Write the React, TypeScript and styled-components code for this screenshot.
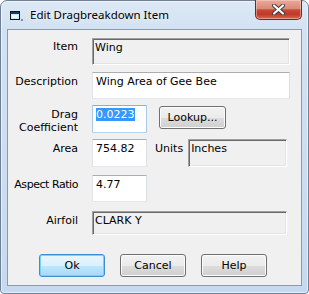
import React from 'react';
import styled, { createGlobalStyle, css } from 'styled-components';

const GlobalStyle = createGlobalStyle`
  html, body {
    margin: 0;
    padding: 0;
    background: #ffffff;
  }
  * {
    box-sizing: border-box;
  }
`;

const Window = styled.div`
  width: 309px;
  height: 294px;
  display: flex;
  flex-direction: column;
  border: 1px solid #6f8096;
  border-radius: 7px 7px 4px 4px;
  background: linear-gradient(to bottom, #dce8f5 0px, #d3e2f2 28px, #c6d9ee 100%);
  box-shadow: inset 0 0 0 1px rgba(255, 255, 255, 0.55);
  font-family: 'DejaVu Sans', Verdana, sans-serif;
  font-size: 11px;
  color: #000;
`;

const TitleBar = styled.div`
  height: 28px;
  display: flex;
  align-items: flex-start;
  flex-shrink: 0;
`;

const TitleIcon = styled.svg`
  margin: 10px 0 0 9px;
  flex-shrink: 0;
`;

const Title = styled.div`
  margin: 6px 0 0 7px;
  font-family: 'Noto Sans', 'Open Sans', sans-serif;
  font-size: 11.5px;
  line-height: 16px;
  color: #000;
  text-shadow: 0 0 6px rgba(255, 255, 255, 0.9);
`;

const CloseButton = styled.div`
  margin: -1px 6px 0 auto;
  width: 47px;
  height: 20px;
  display: flex;
  align-items: center;
  justify-content: center;
  border: 1px solid #6b2b22;
  border-top: none;
  border-radius: 0 0 5px 5px;
  background: linear-gradient(
    to bottom,
    #e9aa9c 0%,
    #db8a78 45%,
    #c74a35 52%,
    #bf3a28 75%,
    #d46b4f 100%
  );
  box-shadow: inset 0 0 0 1px rgba(255, 220, 210, 0.45);
`;

const Client = styled.div`
  flex: 1;
  margin: 0 6px 7px 6px;
  border: 1px solid #8d99a8;
  background: #f0f0f0;
  display: flex;
  flex-direction: column;
  padding-top: 8px;
`;

const Row = styled.div<{ $gap?: number }>`
  display: flex;
  align-items: flex-start;
  margin-top: ${({ $gap }) => $gap ?? 0}px;
`;

const Label = styled.div<{ $tight?: boolean; $top?: number }>`
  width: 70px;
  margin-right: 14px;
  padding-top: ${({ $top }) => $top ?? 3}px;
  display: flex;
  flex-direction: column;
  align-items: flex-end;
  text-align: right;
  line-height: 13px;
  white-space: nowrap;
  ${({ $tight }) =>
    $tight &&
    css`
      letter-spacing: -0.45px;
    `}
`;

const InlineLabel = styled.div`
  margin: 0 5px 0 8px;
  padding-top: 3px;
  line-height: 13px;
`;

const Sunken = styled.div<{ $w: number; $h: number }>`
  width: ${({ $w }) => $w}px;
  height: ${({ $h }) => $h}px;
  background: #f0f0f0;
  border-style: solid;
  border-width: 1px;
  border-color: #a0a0a0 #ffffff #ffffff #a0a0a0;
  box-shadow: inset 1px 1px 0 #696969, inset -1px -1px 0 #e3e3e3;
  padding: 2px 0 0 2px;
  line-height: 13px;
`;

const Edit = styled.div<{ $w: number; $h: number; $focus?: boolean }>`
  width: ${({ $w }) => $w}px;
  height: ${({ $h }) => $h}px;
  background: #ffffff;
  border: 1px solid;
  border-color: #abadb3 #dbdfe6 #e3e9ef #e2e3ea;
  border-radius: 1px;
  padding: 2px 0 0 3px;
  line-height: 13px;
  ${({ $focus }) =>
    $focus &&
    css`
      border-color: #7fb1e3 #a9cbeb #b6d4ef #a9cbeb;
    `}
`;

const Selected = styled.span`
  background: #3399ff;
  color: #ffffff;
`;

const Button = styled.div<{ $w?: number; $default?: boolean }>`
  width: ${({ $w }) => $w ?? 66}px;
  height: 23px;
  display: flex;
  align-items: center;
  justify-content: center;
  border: 1px solid #707070;
  border-radius: 3px;
  background: linear-gradient(to bottom, #f2f2f2 0%, #ebebeb 50%, #dddddd 51%, #cfcfcf 100%);
  box-shadow: inset 0 0 0 1px #fcfcfc;
  color: #000;
  ${({ $default }) =>
    $default &&
    css`
      border-color: #3c8fd0;
      background: linear-gradient(to bottom, #eaf6fd 0%, #d9f0fc 50%, #bee6fd 51%, #a7d9f5 100%);
      box-shadow: inset 0 0 0 1px #6fd6f8;
    `}
`;

const LookupButton = styled(Button)`
  margin: 1px 0 0 12px;
`;

const ButtonRow = styled.div`
  display: flex;
  gap: 15px;
  padding-left: 31px;
  margin-top: 19px;
`;

export default function App() {
  return (
    <>
      <GlobalStyle />
      <Window>
        <TitleBar>
          <TitleIcon width="13" height="10" viewBox="0 0 13 10">
            <rect x="0.5" y="0.5" width="9" height="8" fill="#bfeaf7" stroke="#111" />
            <rect x="1" y="1" width="8" height="2" fill="#1d3a6a" />
            <rect x="2" y="4" width="6" height="3" fill="#eaf9ff" />
            <rect x="11" y="8" width="2" height="2" fill="#8a8a8a" />
          </TitleIcon>
          <Title>Edit Dragbreakdown Item</Title>
          <CloseButton>
            <svg width="13" height="11" viewBox="0 0 13 11">
              <path d="M2 1.5 L11 9.5 M11 1.5 L2 9.5" stroke="#3a3a3a" strokeWidth="4" strokeLinecap="round" />
              <path d="M2 1.5 L11 9.5 M11 1.5 L2 9.5" stroke="#ffffff" strokeWidth="2.2" strokeLinecap="round" />
            </svg>
          </CloseButton>
        </TitleBar>
        <Client>
          <Row>
            <Label $top={2}>Item</Label>
            <Sunken $w={198} $h={27}>Wing</Sunken>
          </Row>
          <Row $gap={7}>
            <Label>Description</Label>
            <Edit $w={198} $h={27}>Wing Area of Gee Bee</Edit>
          </Row>
          <Row $gap={6}>
            <Label>
              <span>Drag</span>
              <span>Coefficient</span>
            </Label>
            <Edit $w={55} $h={28} $focus>
              <Selected>0.0223</Selected>
            </Edit>
            <LookupButton $w={67}>Lookup...</LookupButton>
          </Row>
          <Row $gap={5}>
            <Label>Area</Label>
            <Edit $w={55} $h={28}>754.82</Edit>
            <InlineLabel>Units</InlineLabel>
            <Sunken $w={99} $h={28}>Inches</Sunken>
          </Row>
          <Row $gap={8}>
            <Label $tight>Aspect Ratio</Label>
            <Edit $w={55} $h={27}>4.77</Edit>
          </Row>
          <Row $gap={9}>
            <Label>Airfoil</Label>
            <Sunken $w={195} $h={24}>CLARK Y</Sunken>
          </Row>
          <ButtonRow>
            <Button $default>Ok</Button>
            <Button>Cancel</Button>
            <Button>Help</Button>
          </ButtonRow>
        </Client>
      </Window>
    </>
  );
}
